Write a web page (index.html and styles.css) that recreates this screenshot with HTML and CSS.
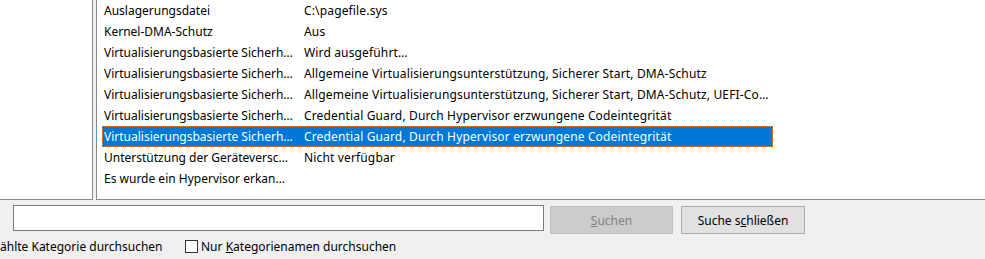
FILE: index.html
```html
<!DOCTYPE html>
<html lang="de">
<head>
  <meta charset="UTF-8">
  <title>Systeminformationen</title>
  <link rel="stylesheet" href="styles.css">
</head>
<body>
  <div class="window">
    <div class="panes">
      <div class="tree"></div>
      <div class="list">
        <div class="row"><span class="item">Auslagerungsdatei</span><span class="value">C:\pagefile.sys</span></div>
        <div class="row"><span class="item">Kernel-DMA-Schutz</span><span class="value">Aus</span></div>
        <div class="row"><span class="item">Virtualisierungsbasierte Sicherh…</span><span class="value">Wird ausgeführt…</span></div>
        <div class="row"><span class="item">Virtualisierungsbasierte Sicherh…</span><span class="value">Allgemeine Virtualisierungsunterstützung, Sicherer Start, DMA-Schutz</span></div>
        <div class="row"><span class="item">Virtualisierungsbasierte Sicherh…</span><span class="value">Allgemeine Virtualisierungsunterstützung, Sicherer Start, DMA-Schutz, UEFI-Co…</span></div>
        <div class="row"><span class="item">Virtualisierungsbasierte Sicherh…</span><span class="value">Credential Guard, Durch Hypervisor erzwungene Codeintegrität</span></div>
        <div class="row selected"><span class="item">Virtualisierungsbasierte Sicherh…</span><span class="value">Credential Guard, Durch Hypervisor erzwungene Codeintegrität</span></div>
        <div class="row"><span class="item">Unterstützung der Geräteversc…</span><span class="value">Nicht verfügbar</span></div>
        <div class="row"><span class="item">Es wurde ein Hypervisor erkan…</span><span class="value"></span></div>
      </div>
    </div>

    <div class="search">
      <input type="text" class="search-input">
      <button class="btn" disabled><u>S</u>uchen</button>
      <button class="btn">Suche s<u>c</u>hließen</button>
    </div>

    <div class="options">
      <label class="option first"><span>ählte Kategorie durchsuchen</span></label>
      <label class="option"><span class="check"></span><span>Nur <u>K</u>ategorienamen durchsuchen</span></label>
    </div>
  </div>
</body>
</html>
```

FILE: styles.css
```css
body {
  margin: 0;
  background-color: #f0f0f0;
  font-family: "Noto Sans", sans-serif;
  font-size: 12px;
  color: #000;
  overflow: hidden;
}
.window {
  display: flex;
  flex-direction: column;
  height: 259px;
}
.panes {
  display: flex;
  gap: 3px;
  height: 203px;
}
.tree {
  width: 92px;
  background-color: #fff;
  border-right: 1px solid #828790;
  border-bottom: 1px solid #828790;
}
.list {
  flex: 1;
  background-color: #fff;
  border-left: 1px solid #828790;
  border-bottom: 1px solid #828790;
  padding-left: 5px;
}
.row {
  display: flex;
  width: 671px;
  height: 21px;
  line-height: 21px;
  white-space: nowrap;
}
.item {
  width: 200px;
  padding-left: 2px;
  box-sizing: border-box;
  overflow: hidden;
}
.value {
  padding-left: 2px;
  letter-spacing: 0.15px;
}
.row.selected {
  background-color: #0078d7;
  color: #fff;
  outline: 1px dotted #f08a24;
  outline-offset: -1px;
}
.search {
  display: flex;
  align-items: flex-start;
  padding: 5px 0 0 13px;
}
.search-input {
  width: 531px;
  height: 26px;
  box-sizing: border-box;
  border: 1px solid #7a7a7a;
  background-color: #fff;
  margin: 0;
  padding: 0 3px;
  font: inherit;
}
.btn {
  height: 28px;
  margin: 1px 0 0 6px;
  box-sizing: border-box;
  border: 1px solid #adadad;
  background-color: #e1e1e1;
  font: inherit;
  color: #000;
  padding: 0;
  width: 124px;
}
.btn + .btn {
  margin-left: 8px;
}
.btn:disabled {
  width: 123px;
  background-color: #cccccc;
  border-color: #bfbfbf;
  color: #838383;
}
.options {
  display: flex;
  align-items: center;
  height: 25px;
  margin-top: 0;
}
.option {
  display: flex;
  align-items: center;
  white-space: nowrap;
}
.option.first {
  width: 185px;
}
.check {
  width: 11px;
  height: 11px;
  border: 1px solid #333;
  background-color: #fff;
  margin-right: 3px;
}
```
